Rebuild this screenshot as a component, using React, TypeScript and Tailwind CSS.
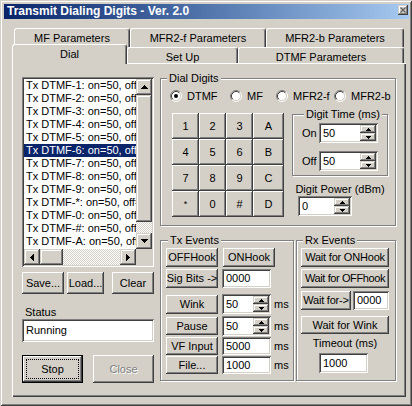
import React from 'react';

const raised = 'shadow-[inset_-1px_-1px_#404040,inset_1px_1px_#fff,inset_-2px_-2px_#808080,inset_2px_2px_#d4d0c8]';
const sunken = 'shadow-[inset_1px_1px_#808080,inset_-1px_-1px_#fff,inset_2px_2px_#404040,inset_-2px_-2px_#d4d0c8]';
const sbBtn = 'shadow-[inset_-1px_-1px_#404040,inset_1px_1px_#d4d0c8,inset_-2px_-2px_#808080,inset_2px_2px_#fff]';

function Btn({ className = '', children }: { className?: string; children?: React.ReactNode }) {
  return (
    <div className={`${raised} bg-[#d4d0c8] flex items-center justify-center whitespace-nowrap ${className}`}>
      {children}
    </div>
  );
}

function Edit({ className = '', children }: { className?: string; children?: React.ReactNode }) {
  return <div className={`${sunken} bg-white flex items-center pl-[4px] ${className}`}>{children}</div>;
}

function Arrow({ dir }: { dir: 'up' | 'down' | 'left' | 'right' }) {
  const pts = {
    up: '3.5,0 7,4 0,4',
    down: '0,0 7,0 3.5,4',
    left: '4,0 4,7 0,3.5',
    right: '0,0 0,7 4,3.5',
  }[dir];
  const vert = dir === 'up' || dir === 'down';
  return (
    <svg width={vert ? 7 : 4} height={vert ? 4 : 7} shapeRendering="crispEdges">
      <polygon points={pts} fill="#000" />
    </svg>
  );
}

function SmallArrow({ up }: { up?: boolean }) {
  return (
    <svg width="5" height="3" shapeRendering="crispEdges">
      <polygon points={up ? '2.5,0 5,3 0,3' : '0,0 5,0 2.5,3'} fill="#000" />
    </svg>
  );
}

function SpinEdit({ className = '', value }: { className?: string; value: string }) {
  return (
    <div className={`${sunken} bg-white flex p-[2px] ${className}`}>
      <div className="flex-1 flex items-center pl-[2px]">{value}</div>
      <div className="w-[16px] flex flex-col">
        <div className={`${sbBtn} bg-[#d4d0c8] flex-1 flex items-center justify-center`}>
          <SmallArrow up />
        </div>
        <div className={`${sbBtn} bg-[#d4d0c8] flex-1 flex items-center justify-center`}>
          <SmallArrow />
        </div>
      </div>
    </div>
  );
}

function Radio({ label, checked, className = '' }: { label: string; checked?: boolean; className?: string }) {
  return (
    <div className={`flex items-center gap-[5px] ${className}`}>
      <svg width="12" height="12">
        <circle cx="6" cy="6" r="4.5" fill="#fff" />
        <path d="M2.11 9.89 A5.5 5.5 0 0 1 9.89 2.11" stroke="#808080" fill="none" />
        <path d="M9.89 2.11 A5.5 5.5 0 0 1 2.11 9.89" stroke="#fff" fill="none" />
        <path d="M2.82 9.18 A4.5 4.5 0 0 1 9.18 2.82" stroke="#404040" fill="none" />
        <path d="M9.18 2.82 A4.5 4.5 0 0 1 2.82 9.18" stroke="#d4d0c8" fill="none" />
        {checked && <circle cx="6" cy="6" r="2" fill="#000" />}
      </svg>
      <span>{label}</span>
    </div>
  );
}

function Group({ label, labelPos, className = '', children }: { label: string; labelPos: string; className?: string; children?: React.ReactNode }) {
  return (
    <div className={`relative border border-[#808080] shadow-[inset_1px_1px_#fff,1px_1px_#fff] ${className}`}>
      <span className={`absolute -top-[7px] ${labelPos} px-[2px] bg-[#d4d0c8] leading-[13px] whitespace-nowrap`}>{label}</span>
      {children}
    </div>
  );
}

function Tab({ className = '', children }: { className?: string; children?: React.ReactNode }) {
  return (
    <div className={`flex justify-center pt-[3px] bg-[#d4d0c8] border-l border-t border-white border-r border-r-[#404040] rounded-t-[3px] shadow-[inset_-1px_0_#808080] whitespace-nowrap ${className}`}>
      {children}
    </div>
  );
}

const items = ['1', '2', '3', '4', '5', '6', '7', '8', '9', '*', '0', '#', 'A'];
const keys = ['1', '2', '3', 'A', '4', '5', '6', 'B', '7', '8', '9', 'C', '*', '0', '#', 'D'];

export default function App() {
  return (
    <div className="w-[412px] h-[406px] bg-[#d4d0c8] font-['Liberation_Sans',Arial,sans-serif] text-[11px] leading-[13px] text-black overflow-hidden flex flex-col shadow-[inset_1px_1px_#d4d0c8,inset_-1px_-1px_#404040,inset_2px_2px_#fff,inset_-2px_-2px_#808080]">
      {/* title bar */}
      <div className="mt-[4px] ml-[4px] w-[405px] h-[15px] bg-linear-to-r from-[#0a246a] to-[#a6caf0] flex items-start justify-between">
        <span className="pl-[3px] text-white font-bold text-[12px] leading-[15px]">Transmit Dialing Digits - Ver. 2.0</span>
        <div className={`mt-[1px] mr-[1px] w-[10px] h-[10px] bg-[#d4d0c8] ${sbBtn} flex items-center justify-center`}>
          <svg width="6" height="6">
            <path d="M0.5 0.5 L5.5 5.5 M5.5 0.5 L0.5 5.5" stroke="#606060" strokeWidth="1.2" />
          </svg>
        </div>
      </div>

      {/* tabs */}
      <div className="mt-[9px] ml-[12px] w-[394px] flex flex-col">
        <div className="flex pl-[2px] h-[19px]">
          <Tab className="w-[116px] h-[19px]">MF Parameters</Tab>
          <Tab className="w-[136px] h-[19px]">MFR2-f Parameters</Tab>
          <Tab className="w-[138px] h-[19px]">MFR2-b Parameters</Tab>
        </div>
        <div className="flex items-end h-[16px]">
          <Tab className="w-[115px] h-[20px] relative top-[1px] z-10">Dial</Tab>
          <Tab className="w-[111px] h-[16px]">Set Up</Tab>
          <Tab className="w-[166px] h-[16px]">DTMF Parameters</Tab>
        </div>
      </div>

      {/* panel */}
      <div className="ml-[12px] w-[394px] h-[334px] shadow-[inset_1px_1px_#fff,inset_-1px_-1px_#404040,inset_-2px_-2px_#808080] flex items-start pl-[10px] pt-[14px]">
        {/* left column */}
        <div className="w-[132px] flex flex-col">
          <div className={`${sunken} bg-white h-[190px] p-[2px] flex flex-col`}>
            <div className="flex h-[170px]">
              <div className="w-[112px] overflow-hidden">
                {items.map((d) => (
                  <div
                    key={d}
                    className={`h-[13px] pl-[2px] whitespace-nowrap ${d === '6' ? 'bg-[#0a246a] text-white' : ''}`}
                  >
                    Tx DTMF-{d}: on=50, off=50
                  </div>
                ))}
              </div>
              <div className="w-[16px] flex flex-col">
                <div className={`${sbBtn} bg-[#d4d0c8] h-[16px] flex items-center justify-center`}>
                  <Arrow dir="up" />
                </div>
                <div className={`${sbBtn} bg-[#d4d0c8] h-[127px]`} />
                <div className="flex-1 bg-[repeating-conic-gradient(#fff_0_25%,#d4d0c8_0_50%)] bg-[length:2px_2px]" />
                <div className={`${sbBtn} bg-[#d4d0c8] h-[16px] flex items-center justify-center`}>
                  <Arrow dir="down" />
                </div>
              </div>
            </div>
            <div className="flex h-[16px]">
              <div className={`${sbBtn} bg-[#d4d0c8] w-[16px] flex items-center justify-center`}>
                <Arrow dir="left" />
              </div>
              <div className={`${sbBtn} bg-[#d4d0c8] w-[23px]`} />
              <div className="flex-1 bg-[repeating-conic-gradient(#fff_0_25%,#d4d0c8_0_50%)] bg-[length:2px_2px]" />
              <div className={`${sbBtn} bg-[#d4d0c8] w-[16px] flex items-center justify-center`}>
                <Arrow dir="right" />
              </div>
              <div className="w-[16px] bg-[#d4d0c8]" />
            </div>
          </div>

          <div className="flex mt-[5px] h-[22px]">
            <Btn className="w-[42px]">Save...</Btn>
            <Btn className="w-[37px] ml-[3px]">Load...</Btn>
            <Btn className="w-[42px] ml-[8px]">Clear</Btn>
          </div>

          <div className="mt-[12px] pl-[3px]">Status</div>
          <Edit className="h-[23px]">Running</Edit>

          <div className="flex mt-[13px]">
            <div className={`w-[61px] h-[28px] border border-black ${raised} bg-[#d4d0c8] p-[3px]`}>
              <div className="w-full h-full border border-dotted border-black flex items-center justify-center">Stop</div>
            </div>
            <Btn className="w-[61px] h-[28px] ml-[10px] text-[#808080] [text-shadow:1px_1px_#fff]">Close</Btn>
          </div>
        </div>

        {/* right column */}
        <div className="ml-[6px] w-[236px] mt-[1px] flex flex-col">
          <Group label="Dial Digits" labelPos="left-[6px]" className="w-[236px] h-[148px] pt-[11px] pl-[9px]">
            <div className="flex h-[12px] items-center">
              <Radio label="DTMF" checked className="w-[60px]" />
              <Radio label="MF" className="w-[46px]" />
              <Radio label="MFR2-f" className="w-[58px]" />
              <Radio label="MFR2-b" />
            </div>
            <div className="flex mt-[11px] pl-[2px]">
              <div className="grid grid-cols-[27px_27px_27px_31px] auto-rows-[26px]">
                {keys.map((k) => (
                  <Btn key={k}>{k === '*' ? <span className="text-[9px]">*</span> : k}</Btn>
                ))}
              </div>
              <div className="ml-[8px] w-[96px] mt-[1px] flex flex-col">
                <Group label="Digit Time (ms)" labelPos="left-[11px]" className="w-[96px] h-[62px] pt-[8px] pl-[9px]">
                  <div className="flex items-center h-[20px]">
                    <span className="w-[17px]">On</span>
                    <SpinEdit className="w-[59px] h-[20px]" value="50" />
                  </div>
                  <div className="flex items-center h-[20px] mt-[8px]">
                    <span className="w-[17px]">Off</span>
                    <SpinEdit className="w-[59px] h-[20px]" value="50" />
                  </div>
                </Group>
                <div className="mt-[7px] text-center whitespace-nowrap">Digit Power (dBm)</div>
                <SpinEdit className="ml-[6px] w-[54px] h-[20px]" value="0" />
              </div>
            </div>
          </Group>

          <div className="flex mt-[14px]">
            <Group label="Tx Events" labelPos="left-[7px]" className="w-[134px] h-[141px] pt-[7px] pl-[5px]">
              <div className="flex">
                <Btn className="w-[52px] h-[19px]">OFFHook</Btn>
                <Btn className="w-[52px] h-[19px] ml-[5px]">ONHook</Btn>
              </div>
              <div className="flex mt-[2px]">
                <Btn className="w-[52px] h-[19px]">Sig Bits -&gt;</Btn>
                <Edit className="w-[49px] h-[19px] ml-[4px]">0000</Edit>
              </div>
              <div className="flex items-center mt-[6px]">
                <Btn className="w-[52px] h-[19px]">Wink</Btn>
                <SpinEdit className="w-[49px] h-[20px] ml-[4px]" value="50" />
                <span className="ml-[3px]">ms</span>
              </div>
              <div className="flex items-center mt-[2px]">
                <Btn className="w-[52px] h-[18px]">Pause</Btn>
                <SpinEdit className="w-[49px] h-[20px] ml-[4px]" value="50" />
                <span className="ml-[3px]">ms</span>
              </div>
              <div className="flex items-center mt-[1px]">
                <Btn className="w-[52px] h-[18px]">VF Input</Btn>
                <Edit className="w-[49px] h-[18px] ml-[4px]">5000</Edit>
                <span className="ml-[3px]">ms</span>
              </div>
              <div className="flex items-center mt-[1px]">
                <Btn className="w-[52px] h-[18px]">File...</Btn>
                <Edit className="w-[49px] h-[18px] ml-[4px]">1000</Edit>
                <span className="ml-[3px]">ms</span>
              </div>
            </Group>

            <Group label="Rx Events" labelPos="left-[6px]" className="ml-[2px] w-[100px] h-[141px] pt-[7px] pl-[4px]">
              <Btn className="w-[88px] h-[19px] tracking-[-0.2px]">Wait for ONHook</Btn>
              <Btn className="w-[88px] h-[19px] mt-[2px] tracking-[-0.4px]">Wait for OFFhook</Btn>
              <div className="flex mt-[3px]">
                <Btn className="w-[50px] h-[19px] tracking-[-0.2px]">Wait for-&gt;</Btn>
                <Edit className="w-[36px] h-[19px] ml-[2px]">0000</Edit>
              </div>
              <Btn className="w-[88px] h-[18px] mt-[6px]">Wait for Wink</Btn>
              <div className="w-[88px] mt-[3px] text-center">Timeout (ms)</div>
              <Edit className="w-[49px] h-[20px] mt-[3px] ml-[18px]">1000</Edit>
            </Group>
          </div>
        </div>
      </div>
    </div>
  );
}
